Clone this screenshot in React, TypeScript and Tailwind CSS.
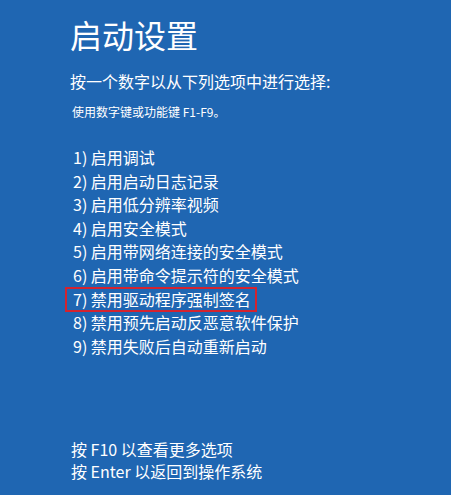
const options = [
  "1) 启用调试",
  "2) 启用启动日志记录",
  "3) 启用低分辨率视频",
  "4) 启用安全模式",
  "5) 启用带网络连接的安全模式",
  "6) 启用带命令提示符的安全模式",
  "7) 禁用驱动程序强制签名",
  "8) 禁用预先启动反恶意软件保护",
  "9) 禁用失败后自动重新启动",
];

export default function App() {
  return (
    <div className="h-[495px] w-[451px] overflow-hidden bg-[#1f66b2] pl-[70px] pt-[14px] font-['Noto_Sans_CJK_SC','Noto_Sans',sans-serif] text-white">
      <h1 className="text-[32px] leading-[40px] font-normal">启动设置</h1>
      <p className="mt-[16px] text-[16px] leading-[22px]">按一个数字以从下列选项中进行选择:</p>
      <p className="mt-[11px] pl-[2px] text-[12px] leading-[18px]">使用数字键或功能键 F1-F9。</p>

      <ul className="mt-[25px] pl-[3px]">
        {options.map((item, i) => (
          <li key={item} className="text-[16px] leading-[23.6px]">
            {i === 6 ? (
              <span className="relative inline-block">
                {item}
                <span className="absolute -inset-y-[1px] -left-[8px] -right-[6px] border-2 border-[#d3232f]" />
              </span>
            ) : (
              item
            )}
          </li>
        ))}
      </ul>

      <div className="mt-[80px] pl-[1px] text-[16px] leading-[22px]">
        <p>按 F10 以查看更多选项</p>
        <p>按 Enter 以返回到操作系统</p>
      </div>
    </div>
  );
}
